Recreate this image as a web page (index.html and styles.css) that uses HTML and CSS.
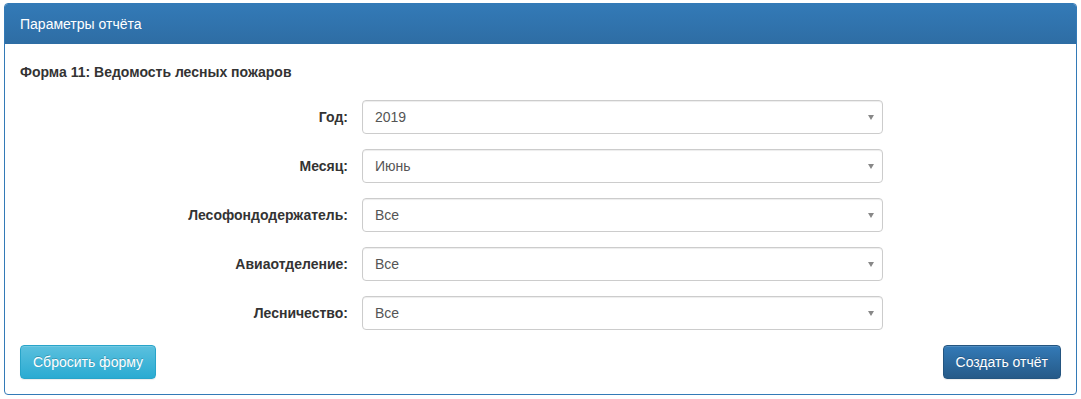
FILE: index.html
```html
<!DOCTYPE html>
<html lang="ru">
<head>
  <meta charset="UTF-8">
  <title>Параметры отчёта</title>
  <link rel="stylesheet" href="styles.css">
</head>
<body>

<div class="panel">
  <div class="panel-heading">Параметры отчёта</div>
  <div class="panel-body">
    <div class="form-title">Форма 11: Ведомость лесных пожаров</div>

    <div class="form-rows">
      <div class="form-row">
        <label>Год:</label>
        <div class="select"><span>2019</span><i class="caret"></i></div>
      </div>
      <div class="form-row">
        <label>Месяц:</label>
        <div class="select"><span>Июнь</span><i class="caret"></i></div>
      </div>
      <div class="form-row">
        <label>Лесофондодержатель:</label>
        <div class="select"><span>Все</span><i class="caret"></i></div>
      </div>
      <div class="form-row">
        <label>Авиаотделение:</label>
        <div class="select"><span>Все</span><i class="caret"></i></div>
      </div>
      <div class="form-row">
        <label>Лесничество:</label>
        <div class="select"><span>Все</span><i class="caret"></i></div>
      </div>
    </div>

    <div class="actions">
      <button class="btn btn-info">Сбросить форму</button>
      <button class="btn btn-primary">Создать отчёт</button>
    </div>
  </div>
</div>

</body>
</html>
```

FILE: styles.css
```css
body {
  font-family: "Liberation Sans", Arial, sans-serif;
  font-size: 14px;
  color: #333;
  background: #fff;
  margin: 0;
  padding: 3px 4px;
}
.panel {
  border: 1px solid #337ab7;
  border-radius: 4px;
  overflow: hidden;
}
.panel-heading {
  height: 40px;
  box-sizing: border-box;
  padding: 11px 15px;
  color: #fff;
  line-height: 18px;
  background: linear-gradient(#337ab7, #2e6da4);
}
.panel-body {
  padding: 15px;
}
.form-title {
  font-weight: bold;
  font-size: 14px;
  line-height: 20px;
  margin: 3px 0 0;
}
.form-rows {
  margin-top: 18px;
  display: flex;
  flex-direction: column;
  gap: 15px;
}
.form-row {
  display: grid;
  grid-template-columns: 328px 521px;
  column-gap: 14px;
  align-items: center;
}
.form-row label {
  text-align: right;
  font-weight: bold;
}
.select {
  height: 34px;
  box-sizing: border-box;
  border: 1px solid #ccc;
  border-radius: 4px;
  padding: 0 12px;
  display: flex;
  align-items: center;
  justify-content: space-between;
  color: #555;
  box-shadow: inset 0 1px 1px rgba(0,0,0,0.075);
}
.caret {
  width: 0;
  height: 0;
  border-left: 3px solid transparent;
  border-right: 3px solid transparent;
  border-top: 5px solid #888;
  margin-right: -4px;
}
.actions {
  margin-top: 15px;
  display: flex;
  justify-content: space-between;
}
.btn {
  font-family: inherit;
  font-size: 14px;
  height: 34px;
  padding: 0 12px;
  border-radius: 4px;
  color: #fff;
  cursor: pointer;
  text-shadow: 0 -1px 0 rgba(0,0,0,0.2);
  box-shadow: inset 0 1px 0 rgba(255,255,255,0.15), 0 1px 1px rgba(0,0,0,0.075);
}
.btn-info {
  background: linear-gradient(#5bc0de, #2aabd2);
  border: 1px solid #28a4c9;
}
.btn-primary {
  background: linear-gradient(#337ab7, #265a88);
  border: 1px solid #245580;
}
```
